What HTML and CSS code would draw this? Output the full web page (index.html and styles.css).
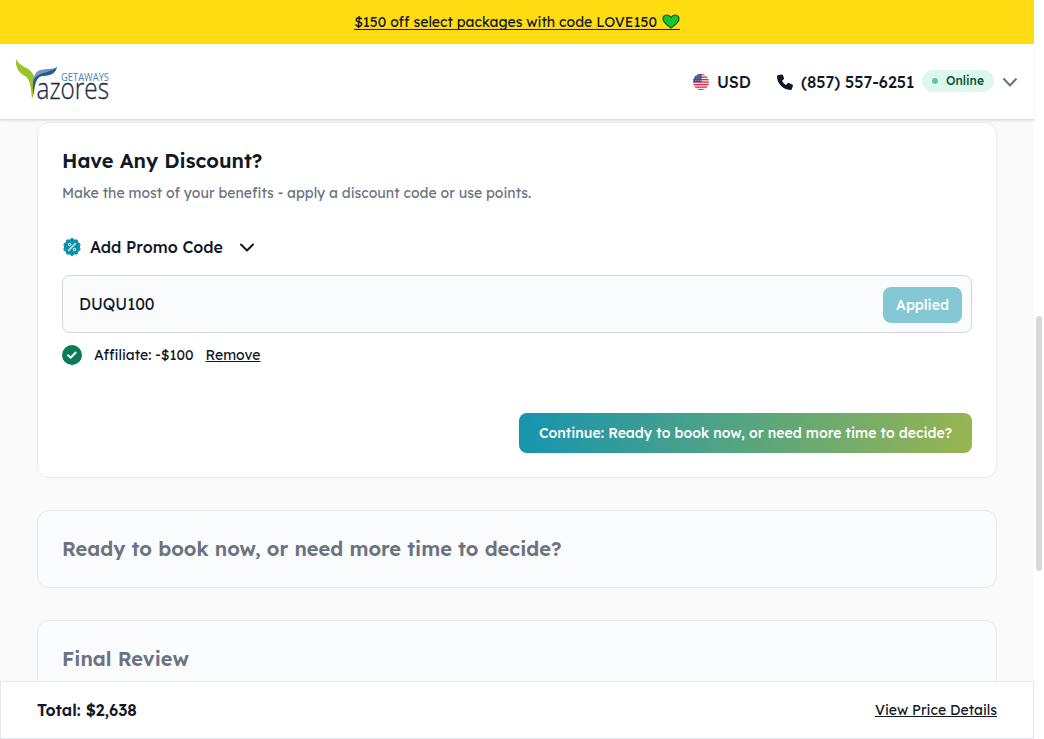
FILE: index.html
```html
<!DOCTYPE html>
<html lang="en">
<head>
    <meta charset="UTF-8">
    <meta name="viewport" content="width=device-width, initial-scale=1.0">
    <title>Azores Getaways - Checkout</title>
    <link rel="stylesheet" href="styles.css">
</head>
<body>
    <div class="page">
        <div class="promo-bar">
            <a href="#" class="promo-link"><span class="promo-text">$150 off select packages with code LOVE150</span>
                <svg class="heart" width="18" height="15" viewBox="0 0 18 15"><path d="M9 14C6.500 12 1 8.800 1 4.800C1 .8 6.500-.2 9 3.500C11.500-.2 17 .8 17 4.800C17 8.800 11.500 12 9 14Z" fill="#16c62e" stroke="#14591b" stroke-width="1.200"/></svg></a>
        </div>

        <header class="header">
            <a href="#" class="logo">
                <svg width="100" height="56" viewBox="0 0 100 56">
                    <path d="M1 0C0 8 4 14 10 17C15 20 16 28 17 40C20 32 21 22 18 15C13 7 6 9 1 0Z" fill="#9cc22d"/>
                    <path d="M42 8C41 15 34 17 27 17C22 18 19 25 18.500 37C17 26 18 16 23 13C29 10 36 13 42 8Z" fill="#275c91"/>
                    <path d="M42 8C37 11 29 9 23 12C20 14 19 17 18.500 22C21 13 33 15 42 8Z" fill="#7198be"/>
                    <text class="logo-small" x="46" y="22" textLength="48" lengthAdjust="spacingAndGlyphs">GETAWAYS</text>
                    <text class="logo-big" x="21.500" y="40" textLength="72.500" lengthAdjust="spacingAndGlyphs">azores</text>
                </svg>
            </a>
            <div class="header-right">
                <div class="currency">
                    <svg width="16" height="16" viewBox="0 0 16 16">
                        <clipPath id="flag"><circle cx="8" cy="8" r="8"/></clipPath>
                        <g clip-path="url(#flag)">
                            <path fill="#f6e9ed" d="M0 0h16v16H0z"/>
                            <path stroke="#d52b45" stroke-width="1.250" d="M0 .7h16M0 3.200h16M0 5.700h16M0 8.200h16M0 10.700h16M0 13.200h16M0 15.600h16"/>
                            <path fill="#394e86" d="M0 0h8.500v8H0z"/>
                            <path stroke="#b6bedb" stroke-width=".9" stroke-dasharray="1 1.300" d="M3 2h5M1 4.200h7M0 6.400h8"/>
                        </g>
                    </svg>
                    <span class="currency-name">USD</span>
                </div>
                <a href="#" class="phone">
                    <svg width="16" height="16" viewBox="0 0 16 16"><path d="M4.900.5L1.500 1C.6 1.200 0 1.700 0 2.600C.2 9.900 6 15.600 13.200 16C14.100 16 14.700 15.500 14.900 14.700L15.900 11.900C16.100 11.200 15.800 10.700 15.200 10.400L12 9C11.400 8.700 10.900 8.800 10.500 9.300L9.200 10.900C7.300 10 5.900 8.600 5 6.700L6.500 5.400C7 5 7.200 4.500 6.900 3.900L5.900 1.100C5.700.6 5.400.4 4.900.5Z" fill="#111827"/></svg>
                    <span class="phone-number">(857) 557-6251</span>
                </a>
                <span class="status"><i class="dot"></i><span class="status-text">Online</span></span>
                <svg class="header-arrow" width="16" height="16" viewBox="0 0 16 16"><path d="M1.500 4.500L8 11.500L14.500 4.500" fill="none" stroke="#6b7280" stroke-width="2"/></svg>
            </div>
        </header>

        <main class="content">
            <section class="card card-active">
                <h2 class="title">Have Any Discount?</h2>
                <p class="subtitle">Make the most of your benefits - apply a discount code or use points.</p>
                <div class="promo-toggle">
                    <svg width="20" height="20" viewBox="0 0 20 20">
                        <path d="M10 1.200L12.300 3L15.100 2.900L15.900 5.600L18.200 7.200L17.300 10L18.200 12.800L15.900 14.400L15.100 17.100L12.300 17L10 18.800L7.700 17L4.900 17.100L4.100 14.400L1.800 12.800L2.700 10L1.800 7.200L4.100 5.600L4.900 2.900L7.700 3Z" fill="#0891a8" stroke="#0891a8" stroke-linejoin="round"/>
                        <path d="M6.500 13.500L13.500 6.500" stroke="#fff" stroke-width="1.300" stroke-linecap="round"/>
                        <circle cx="7.600" cy="7.500" r="1.200" fill="none" stroke="#fff"/><circle cx="12.500" cy="12.500" r="1.200" fill="none" stroke="#fff"/>
                    </svg>
                    <span class="promo-label">Add Promo Code</span>
                    <svg class="toggle-arrow" width="16" height="16" viewBox="0 0 16 16"><path d="M2 5.500L8 11.500L14 5.500" fill="none" stroke="#111827" stroke-width="2" stroke-linecap="round" stroke-linejoin="round"/></svg>
                </div>
                <div class="code-box">
                    <span class="code">DUQU100</span>
                    <button class="applied" disabled>Applied</button>
                </div>
                <div class="affiliate">
                    <svg width="20" height="20" viewBox="0 0 20 20"><circle cx="10" cy="10" r="10" fill="#087a55"/><path d="M6 10.300L8.700 12.700L13.700 7.500" fill="none" stroke="#fff" stroke-width="2" stroke-linecap="round" stroke-linejoin="round"/></svg>
                    <span class="affiliate-text">Affiliate: -$100</span>
                    <a href="#" class="remove">Remove</a>
                </div>
                <button class="continue">Continue: Ready to book now, or need more time to decide?</button>
            </section>

            <section class="card card-muted">
                <h2 class="title">Ready to book now, or need more time to decide?</h2>
            </section>

            <section class="card card-muted">
                <h2 class="title">Final Review</h2>
            </section>
        </main>

        <footer class="total-bar">
            <span class="total">Total: $2,638</span>
            <a href="#" class="details">View Price Details</a>
        </footer>
    </div>
    <div class="scrollbar"><div class="thumb"></div></div>
</body>
</html>
```
FILE: styles.css
```css
* {
    box-sizing: border-box;
}

body {
    margin: 0;
    height: 739px;
    display: flex;
    overflow: hidden;
    font-family: "Lexend", "Inter", sans-serif;
    font-size: 14px;
    line-height: 20px;
    color: #111827;
    background-color: #ffffff;
}

a {
    color: inherit;
}

svg {
    display: block;
    flex: none;
}

span, h2, p, a, button {
    white-space: nowrap;
}

.page {
    width: 1034px;
    height: 739px;
    display: flex;
    flex-direction: column;
    background-color: #fafafa;
}

.promo-bar {
    flex: none;
    height: 44px;
    display: flex;
    align-items: center;
    justify-content: center;
    background-color: #ffdc12;
}

.promo-link {
    display: flex;
    align-items: center;
    gap: 5px;
    height: 16px;
    border-bottom: 1px solid #111827;
    text-decoration: none;
}

/* Header */
.header {
    flex: none;
    height: 76px;
    display: flex;
    justify-content: space-between;
    padding: 0 16px 0 15px;
    background-color: #ffffff;
    border-bottom: 1px solid #dedede;
    box-shadow: 0 1px 2px rgba(0, 0, 0, 0.1);
    z-index: 1;
}

.logo {
    padding-top: 15px;
}

.logo-small {
    font-family: "Open Sans", sans-serif;
    font-size: 10px;
    fill: #4384b0;
}

.logo-big {
    font-family: "Open Sans", sans-serif;
    font-size: 29px;
    font-weight: 300;
    fill: #202c44;
    stroke: #202c44;
    stroke-width: 0.3px;
}

.header-right {
    display: flex;
    align-items: center;
    font-size: 16px;
    font-weight: 500;
}

.currency {
    display: flex;
    align-items: center;
    gap: 8px;
    width: 84px;
}

.phone {
    display: flex;
    align-items: center;
    gap: 8px;
    width: 145px;
    text-decoration: none;
}

.status {
    display: flex;
    align-items: center;
    gap: 8px;
    width: 72px;
    height: 22px;
    margin-bottom: 2px;
    padding-left: 10px;
    border-radius: 11px;
    background-color: #def7ec;
    color: #03543f;
    font-size: 12px;
}

.dot {
    width: 6px;
    height: 6px;
    border-radius: 50%;
    background-color: #5fc9a0;
}

.header-arrow {
    margin-left: 8px;
}

/* Checkout steps */
.content {
    flex: 1;
    min-height: 0;
    overflow: hidden;
    display: flex;
    flex-direction: column;
    gap: 32px;
    padding: 2px 37px 0;
}

.card {
    flex: none;
    padding: 24px;
    border: 1px solid #e8eaec;
    border-radius: 12px;
}

.card-active {
    display: flex;
    flex-direction: column;
    height: 356px;
    background-color: #ffffff;
}

.card-muted {
    height: 78px;
    background-color: #fafbfc;
    color: #6b7280;
}

.title {
    margin: 0;
    font-size: 20px;
    line-height: 28px;
    font-weight: 600;
}

.subtitle {
    margin: 8px 0 0;
    color: #6b7280;
}

.promo-toggle {
    display: flex;
    align-items: center;
    gap: 8px;
    height: 24px;
    margin-top: 32px;
    font-size: 16px;
    font-weight: 500;
}

.promo-label {
    width: 133px;
}

.toggle-arrow {
    margin-left: 8px;
}

.code-box {
    display: flex;
    align-items: center;
    justify-content: space-between;
    height: 58px;
    margin-top: 16px;
    padding: 1px 9px 0 16px;
    border: 1px solid #d1d5db;
    border-radius: 8px;
    background-color: #fafbfc;
    font-size: 16px;
}

.code {
    margin-bottom: 1px;
}

button {
    border: none;
    border-radius: 8px;
    font-family: inherit;
    font-size: 14px;
    font-weight: 500;
    color: #ffffff;
}

.applied {
    width: 79px;
    height: 36px;
    padding: 0;
    background-color: #84c8d3;
}

.affiliate {
    display: flex;
    align-items: center;
    gap: 12px;
    margin-top: 12px;
}

.continue {
    align-self: flex-end;
    width: 453px;
    height: 40px;
    margin-top: 48px;
    padding: 0;
    background: linear-gradient(100deg, #1594b0, #99b550);
}

/* Total bar */
.total-bar {
    flex: none;
    height: 58px;
    display: flex;
    align-items: center;
    justify-content: space-between;
    padding: 0 36px;
    background-color: #ffffff;
    border: 1px solid #e5e7eb;
}

.total {
    font-size: 16px;
    font-weight: 600;
}

.scrollbar {
    width: 10px;
    padding: 316px 2px 0;
    background-color: #ffffff;
}

.thumb {
    height: 255px;
    border-radius: 3px;
    background-color: #d8d8d8;
}
```
